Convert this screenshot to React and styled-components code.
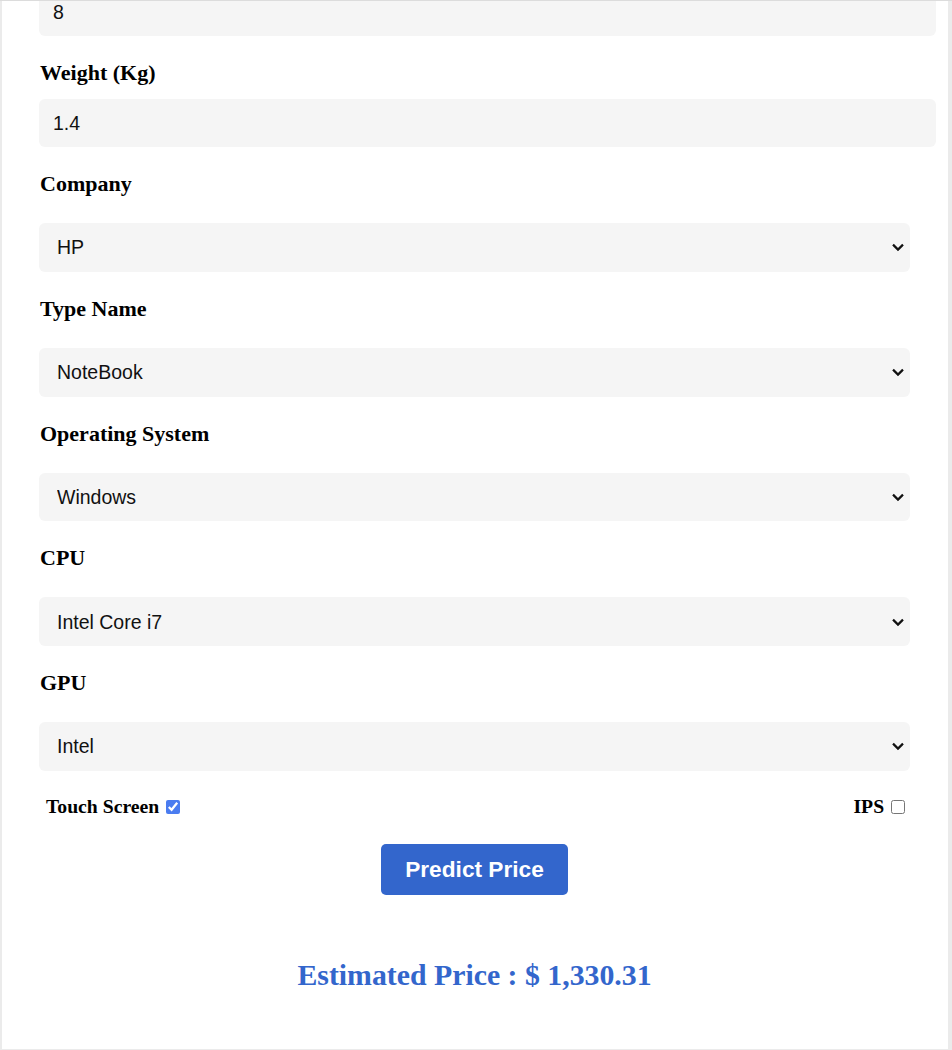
import styled, { createGlobalStyle } from "styled-components";

const GlobalStyle = createGlobalStyle`
    html, body {
        margin: 0;
        padding: 0;
        background: #ebebeb;
        font-family: "Liberation Serif", "Times New Roman", serif;
    }
`;

const selects = [
    { label: "Company", value: "HP", options: ["Apple", "HP", "Dell", "Lenovo", "Asus", "Acer"] },
    { label: "Type Name", value: "NoteBook", options: ["NoteBook", "Ultrabook", "Gaming", "2 in 1 Convertible"] },
    { label: "Operating System", value: "Windows", options: ["Windows", "Mac", "Linux", "Other"] },
    { label: "CPU", value: "Intel Core i7", options: ["Intel Core i3", "Intel Core i5", "Intel Core i7", "AMD Processor"] },
    { label: "GPU", value: "Intel", options: ["Intel", "Nvidia", "AMD"] },
];

function Chevron() {
    return (
        <Arrow width="12" height="8" viewBox="0 0 12 8">
            <polyline points="1,1.2 6,6.2 11,1.2" fill="none" stroke="#111" strokeWidth="2.2" />
        </Arrow>
    );
}

export default function App() {
    return (
        <Frame>
            <GlobalStyle />
            <Card>
                <Form onSubmit={(e) => e.preventDefault()}>
                    <TextInput $first type="text" defaultValue="8" />
                    <Label>Weight (Kg)</Label>
                    <TextInput type="text" defaultValue="1.4" />

                    {selects.map((s) => (
                        <div key={s.label}>
                            <Label>{s.label}</Label>
                            <SelectWrap>
                                <Select defaultValue={s.value}>
                                    {s.options.map((o) => (
                                        <option key={o}>{o}</option>
                                    ))}
                                </Select>
                                <Chevron />
                            </SelectWrap>
                        </div>
                    ))}

                    <CheckRow>
                        <CheckLabel>
                            Touch Screen <input type="checkbox" defaultChecked />
                        </CheckLabel>
                        <CheckLabel>
                            IPS <input type="checkbox" />
                        </CheckLabel>
                    </CheckRow>

                    <Predict type="submit">Predict Price</Predict>
                </Form>
                <Result>Estimated Price : $ 1,330.31</Result>
            </Card>
        </Frame>
    );
}

const Frame = styled.div`
    border-top: 1px solid #dcdcdc;
    padding: 0 4px 0 2px;
    min-height: 1049px;
    box-sizing: border-box;
    display: flex;
    flex-direction: column;
`;

const Card = styled.div`
    flex: 1;
    background: #ffffff;
    padding: 0 38px 0 37px;
    overflow: hidden;
`;

const Form = styled.form`
    display: flex;
    flex-direction: column;
`;

const Label = styled.div`
    font-size: 22px;
    font-weight: 700;
    line-height: 25px;
    color: #000;
    margin-top: 24px;
    padding-left: 1px;
`;

const TextInput = styled.input`
    display: block;
    width: 100%;
    height: 48px;
    box-sizing: content-box;
    padding: 0 12px 0 14px;
    margin: ${(p) => (p.$first ? "-13px 0 0" : "14px 0 0")};
    border: none;
    border-radius: 6px;
    background: #f5f5f5;
    font-family: "Liberation Sans", Arial, sans-serif;
    font-size: 19.5px;
    color: #111;
    outline: none;
`;

const SelectWrap = styled.div`
    position: relative;
    margin-top: 27px;
`;

const Select = styled.select`
    display: block;
    width: 100%;
    height: 48.75px;
    padding: 0 36px 0 18px;
    border: none;
    border-radius: 6px;
    background: #f5f5f5;
    font-family: "Liberation Sans", Arial, sans-serif;
    font-size: 19.5px;
    color: #111;
    outline: none;
    appearance: none;
    -webkit-appearance: none;
`;

const Arrow = styled.svg`
    position: absolute;
    right: 6px;
    top: 50%;
    transform: translateY(-45%);
    pointer-events: none;
`;

const CheckRow = styled.div`
    display: flex;
    justify-content: space-between;
    align-items: center;
    margin-top: 25px;
    padding: 0 2px 0 7px;
`;

const CheckLabel = styled.label`
    font-size: 19.7px;
    font-weight: 700;
    line-height: 21px;
    color: #000;
    input {
        accent-color: #4a7cf0;
        width: 14px;
        height: 14px;
        margin: 0 3px 0 2px;
        vertical-align: -1px;
    }
`;

const Predict = styled.button`
    align-self: center;
    margin-top: 27px;
    height: 51px;
    padding: 0 24px;
    border: none;
    border-radius: 5px;
    background: #3366cc;
    color: #fff;
    font-family: "Liberation Sans", Arial, sans-serif;
    font-size: 22.7px;
    font-weight: 700;
    cursor: pointer;
`;

const Result = styled.h2`
    margin: 62px 0 0;
    text-align: center;
    font-size: 29.8px;
    font-weight: 700;
    line-height: 35px;
    color: #3366cc;
`;
